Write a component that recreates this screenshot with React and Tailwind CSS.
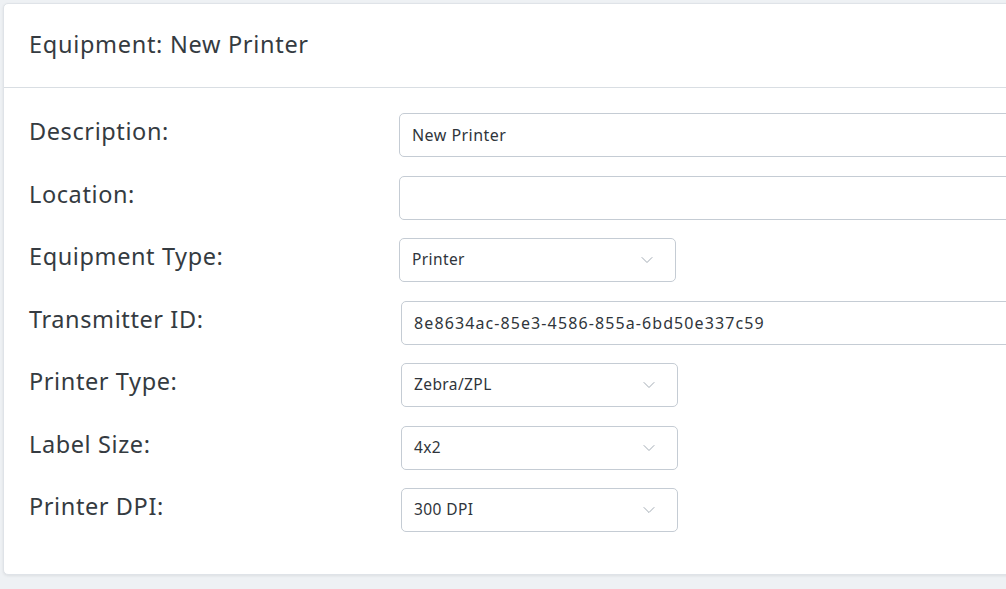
import { ChevronDown } from "lucide-react";

const rows = [
  { label: "Description:", kind: "input", value: "New Printer" },
  { label: "Location:", kind: "input", value: "" },
  { label: "Equipment Type:", kind: "select", value: "Printer" },
  { label: "Transmitter ID:", kind: "input", value: "8e8634ac-85e3-4586-855a-6bd50e337c59", shift: true, wide: true },
  { label: "Printer Type:", kind: "select", value: "Zebra/ZPL", shift: true },
  { label: "Label Size:", kind: "select", value: "4x2", shift: true },
  { label: "Printer DPI:", kind: "select", value: "300 DPI", shift: true },
];

export default function App() {
  return (
    <div
      className="w-[1006px] h-[589px] overflow-hidden bg-[#eef1f4] pt-[3px] pl-[3px]"
      style={{ fontFamily: "'Noto Sans', 'Open Sans', sans-serif" }}
    >
      <div className="w-[1100px] bg-white border border-[#dfe3e8] rounded-[5px] shadow-[0_1px_3px_rgba(0,0,0,0.08)]">
        {/* header */}
        <div className="h-[84px] flex items-center px-[25px] pb-[1px] border-b border-[#d9dee3]">
          <h1 className="text-[23.5px] tracking-[0.7px] text-[#353b41]">Equipment: New Printer</h1>
        </div>

        {/* body */}
        <div className="pt-[25px] pb-[42px] px-[25px] flex flex-col gap-[18.5px]">
          {rows.map((r) => (
            <Row key={r.label} {...r} />
          ))}
        </div>
      </div>
    </div>
  );
}

function Row({ label, kind, value, shift, wide }) {
  return (
    <div className="flex items-start">
      <div className="w-[370px] shrink-0 text-[23.5px] tracking-[0.6px] leading-[36px] text-[#353b41]">{label}</div>
      <div className={shift ? "ml-[2px] flex-1" : "flex-1"}>
        {kind === "input" ? (
          <div
            className={`h-[44px] w-full border border-[#c5ccd4] rounded-[5px] flex items-center px-[12px] text-[16px] text-[#2f353b] ${
              wide ? "tracking-[1.1px]" : "tracking-[0.45px]"
            }`}
          >
            {value}
          </div>
        ) : (
          <div className="h-[44px] w-[277px] border border-[#c5ccd4] rounded-[5px] flex items-center justify-between pl-[12px] pr-[18px] text-[15.5px] tracking-[0.4px] text-[#2f353b]">
            <span>{value}</span>
            <ChevronDown size={20} strokeWidth={1.2} className="text-[#a3acb5]" />
          </div>
        )}
      </div>
    </div>
  );
}
